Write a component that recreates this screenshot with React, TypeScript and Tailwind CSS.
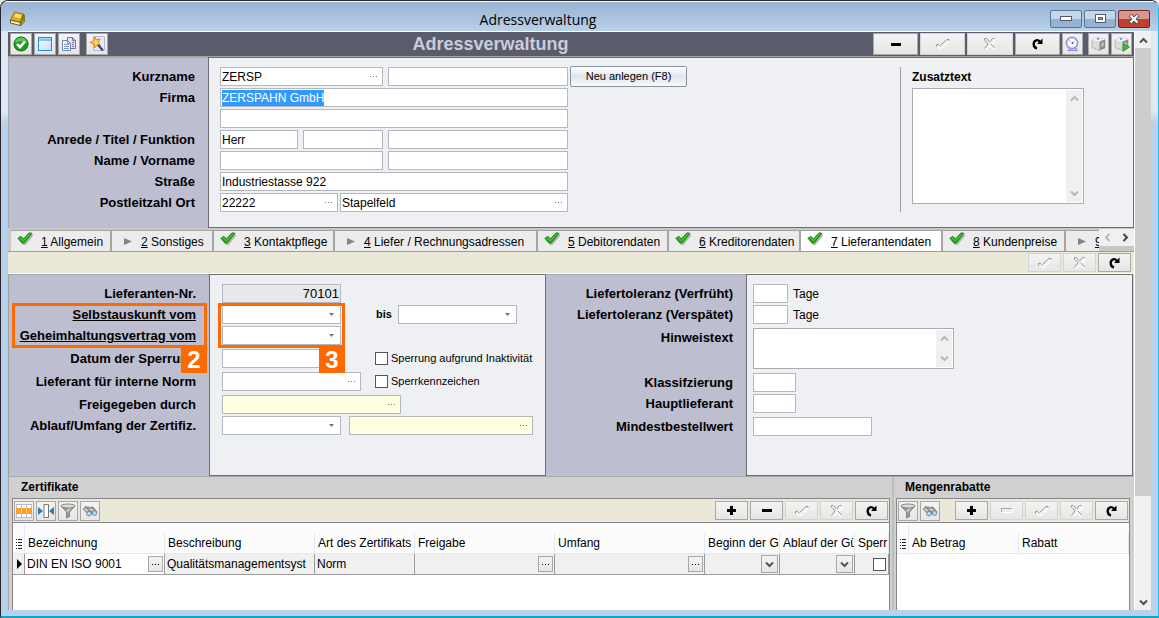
import { useEffect, useRef } from "react";
import type { ReactNode } from "react";
import clsx from "clsx";

/*---------Icons----------*/
const MinusIcon = () => (
  <svg width="10" height="3" shapeRendering="crispEdges">
    <rect width="10" height="3" fill="#000" />
  </svg>
);

const PlusIcon = () => (
  <svg width="9" height="9" shapeRendering="crispEdges">
    <path d="M3 0h3v3h3v3h-3v3h-3v-3h-3v-3h3z" fill="#000" />
  </svg>
);

const MinusOffIcon = () => (
  <svg width="13" height="7" viewBox="0 0 13 7" fill="none" shapeRendering="crispEdges">
    <path d="M1.5 5.500h11v-4" stroke="#fff" />
    <path d="M1.500 5v-3.500h10" stroke="#a8a8a8" />
  </svg>
);

const CheckOffIcon = () => (
  <svg width="14" height="12" viewBox="0 0 14 12" fill="none">
    <path d="M2 8l3 3 8.500-8.500" stroke="#fff" strokeWidth="1.200" />
    <path d="M.5 8.500v-2h2l2 2M5 7l6-5.500h2v1.500" stroke="#999" />
  </svg>
);

const CrossOffIcon = () => (
  <svg width="12" height="12" viewBox="0 0 12 12" fill="none">
    <path d="M1.500 11.500l4.500-4 4 4M7.500 6.500l4-4.500" stroke="#fff" strokeWidth="1.200" />
    <path d="M.5 2.500v-2h2l3 3.500 3-3.500h2M1 2.500l3 3.500-3.500 4.500M7 6l3.500 4" stroke="#999" />
  </svg>
);

const RefreshIcon = () => (
  <svg width="11" height="12" viewBox="0 0 11 12">
    <path d="M5 10.500C.8 9.500.6 3.300 4.300 2.300c1.600-.4 2.700.3 3.500 1.500" fill="none" stroke="#000" strokeWidth="2.300" />
    <path d="M10.500.5v5.500H5z" fill="#000" />
  </svg>
);

const OkIcon = () => (
  <svg width="16" height="16" viewBox="0 0 16 16">
    <circle cx="8" cy="8" r="7.300" fill="#1c9a22" />
    <path d="M1.500 7a6.500 6.500 0 0 1 13 0c-4-2-9-2-13 0z" fill="#5cc257" />
    <circle cx="8" cy="8" r="7" fill="none" stroke="#16781b" />
    <path d="M4 8l3 3 5-5.500" fill="none" stroke="#fff" strokeWidth="2.600" />
  </svg>
);

const WindowIcon = () => (
  <svg width="16" height="16" viewBox="0 0 16 16">
    <defs>
      <linearGradient id="win" x1="0" y1="0" x2="1" y2="1">
        <stop offset="0" stopColor="#fff" />
        <stop offset="1" stopColor="#cfd6f7" />
      </linearGradient>
    </defs>
    <rect x="1.500" y="1.500" width="13" height="13" fill="url(#win)" stroke="#1592f0" />
    <path d="M2 2.500h12" stroke="#a5dafc" />
    <path d="M1 4h14" stroke="#1592f0" />
  </svg>
);

const CopyIcon = () => (
  <svg width="16" height="16" viewBox="0 0 16 16">
    <path d="M6.500 1.500h5l3 3v8h-8z" fill="#dfe1f4" stroke="#7b6fa8" />
    <path d="M11.500 1.500v3h3M11 6.500h2M11 8.500h2M11 10.500h2" fill="none" stroke="#7b6fa8" />
    <path d="M1.500 4.500h5l3 3v7h-8z" fill="#f7f9fd" stroke="#6b86b5" />
    <path d="M6.500 4.500v3h3M3 8.500h5M3 10.500h5M3 12.500h5" fill="none" stroke="#7c97c5" />
  </svg>
);

const WizardIcon = () => (
  <svg width="16" height="16" viewBox="0 0 16 16">
    <path d="M4.500.5h11v14h-11z" fill="#e6e9fb" stroke="#b2badb" />
    <path d="M6 1l1.500 3 3.500-1-1.500 3.500 2 3-3.500-.5-2.500 3-.5-4-4-1.500 3.500-1.500z" fill="#fdd05f" stroke="#e87d12" />
    <path d="M9 9l5 5.500" stroke="#3b4457" strokeWidth="2" />
  </svg>
);

const ClockIcon = () => (
  <svg width="15" height="16" viewBox="0 0 15 16">
    <path d="M4 13l-1 1.500h9.500L11 12z" fill="#c9c9ee" stroke="#8f90cc" />
    <circle cx="7" cy="7" r="5.600" fill="#fbfbff" stroke="#9a9bdc" strokeWidth="1.800" />
    <circle cx="7.500" cy="7" r="1" fill="#3f4484" />
    <path d="M4 4l3 3M10 5l-2 1.500" stroke="#c3c4e8" />
  </svg>
);

const BoxIcon = ({ play }: { play?: boolean }) => (
  <svg width="16" height="16" viewBox="0 0 16 16">
    <path d="M1 4l6-2.500 7 2v8.500l-6 2.500-7-3z" fill="#dcdcdc" stroke="#a5a5a5" strokeWidth=".7" />
    <path d="M1 4l6-2.500 7 2-5.500 2z" fill="#f7f7f7" />
    <path d="M8.500 5.500l5.500-2v8.500l-5.500 2.500z" fill="#8b8b8b" />
    <path d="M10 7l3-1v4l-3 1z" fill="#b6b6b6" />
    <path d="M6 2.500l2 1" stroke="#4aa7b5" strokeWidth="1.500" />
    {play && <path d="M9 7.500l6.500 3.500-6.500 4.500z" fill="#3dbb2f" stroke="#1f8a1a" strokeWidth=".6" />}
  </svg>
);

const BookIcon = () => (
  <svg width="17" height="16" viewBox="0 0 17 16">
    <path d="M5.500 1l9 2-3 8.500L1.500 9z" fill="#dba91a" stroke="#8a6508" strokeWidth=".8" />
    <path d="M6.500 2.500l6 1.300-1.300 3.700L5 6z" fill="#f8dc6c" />
    <path d="M1.500 9l10 2.500-.5 3L1.500 12z" fill="#f5efcf" stroke="#6c4c08" strokeWidth=".9" />
    <path d="M11.500 11.500l3-8.500 1 1.500v6l-4 4.500z" fill="#a47708" stroke="#6c4c08" strokeWidth=".5" />
    <rect x="13" y="10" width="2" height="2.500" fill="#38d62c" />
  </svg>
);

const TickIcon = () => (
  <svg width="17" height="15" viewBox="0 0 17 15">
    <path d="M2 8.500l3-2.500 3 2.500 5.500-6.500 2.500.5-.5 2-7 8.500h-2.500z" fill="#8b8b8b" opacity=".6" />
    <path d="M.8 6.300L3.800 4.300 6.500 6.800 12 .8l3 .4L7.300 11 5 11z" fill="#27a81b" stroke="#1a7f14" strokeWidth=".8" strokeLinejoin="round" />
    <path d="M3 5.700l3.500 3L13 1.800" fill="none" stroke="#5fd048" />
  </svg>
);

const PlayIcon = () => (
  <svg width="8" height="7" viewBox="0 0 8 7">
    <path d="M0 0l8 3.500-8 3.500z" fill="#858585" />
  </svg>
);

const GridIcon = () => (
  <svg width="16" height="16" viewBox="0 0 16 16" shapeRendering="crispEdges">
    <path d="M0 1h16v14h-16z" fill="#fff" />
    <path d="M0 1.500h16M0 14.500h16M5.500 1v14M10.500 1v14M.5 1v14M15.500 1v14" stroke="#b7b9e0" />
    <path d="M0 5h16v6h-16z" fill="#fba22c" />
    <path d="M5.500 5v6M10.500 5v6" stroke="#ffc876" />
  </svg>
);

const ColumnIcon = () => (
  <svg width="16" height="16" viewBox="0 0 16 16">
    <path d="M0 4l5 4-5 4zM16 4l-5 4 5 4z" fill="#2f78bd" />
    <rect x="6" y="1.500" width="4.500" height="13" fill="#fff" stroke="#7d7d7d" />
  </svg>
);

const FilterIcon = () => (
  <svg width="16" height="16" viewBox="0 0 16 16">
    <path d="M1 3l5.500 6v6l3-1.500V9L15 3z" fill="#9b9b9b" stroke="#6f6f6f" strokeWidth=".7" />
    <path d="M7.500 9l4-4.500h-2l-3 4z" fill="#ededed" />
    <ellipse cx="8" cy="3" rx="7" ry="2" fill="#dedede" stroke="#6f6f6f" strokeWidth=".8" />
  </svg>
);

const BinocularsIcon = () => (
  <svg width="16" height="16" viewBox="0 0 16 16">
    <path d="M1 6l2.500-2.500L8 4.500l3-.5 4 5-2 2-4-1-3 1z" fill="#9a9a9a" stroke="#666" strokeWidth=".6" />
    <path d="M2.500 5.500l4 3.500M8 5.500l4 3" stroke="#dcdcdc" strokeWidth="1.400" />
    <circle cx="7" cy="10.500" r="2.300" fill="#b5dcf5" stroke="#5c7180" strokeWidth=".8" />
    <circle cx="12.500" cy="10" r="2.300" fill="#b5dcf5" stroke="#5c7180" strokeWidth=".8" />
  </svg>
);

const ListIcon = () => (
  <svg width="6" height="10" viewBox="0 0 6 10" shapeRendering="crispEdges">
    <path d="M0 .5h1M2 .5h4M0 3.500h1M2 3.500h4M0 6.500h1M2 6.500h4M0 9.500h1M2 9.500h4" stroke="#222" />
  </svg>
);

const Dots = ({ dark }: { dark?: boolean }) => (
  <svg width="7" height="1" shapeRendering="crispEdges">
    <path d="M0 .5h1M3 .5h1M6 .5h1" stroke={dark ? "#000" : "#777"} />
  </svg>
);

const Chevron = ({ dir, color = "#b8b8b8" }: { dir: "up" | "down" | "left" | "right"; color?: string }) => {
  const paths = {
    up: "M1 6.500l3.500-3.500 3.500 3.500",
    down: "M1 2.500l3.500 3.500 3.500-3.500",
    left: "M6.500 1l-3.500 3.500 3.500 3.500",
    right: "M2.500 1l3.500 3.500-3.500 3.500",
  };
  return (
    <svg width="9" height="9" viewBox="0 0 9 9">
      <path d={paths[dir]} fill="none" stroke={color} strokeWidth="2" />
    </svg>
  );
};

/*---------Form elements----------*/
const ToolButton = ({ label, className, off, children }: { label: string; className?: string; off?: boolean; children: ReactNode }) => (
  <button
    type="button"
    aria-label={label}
    disabled={off}
    className={clsx(
      "flex shrink-0 items-center justify-center border bg-linear-to-b from-[#f3f3f3] to-[#e6e6e6]",
      off ? "border-[#d4d4d4]" : "border-[#a8a8a8]",
      className
    )}
  >
    {children}
  </button>
);

type FieldProps = { id: string; label?: string; value?: string; className?: string; dots?: boolean; yellow?: boolean };

const TextField = ({ id, label, value = "", className, dots, yellow }: FieldProps) => (
  <div className={clsx("flex h-[19px] shrink-0 border border-[#b3b7bf]", yellow ? "bg-[#ffffe1]" : "bg-white", className)}>
    <input id={id} aria-label={label} defaultValue={value} className="w-0 min-w-0 flex-1 px-px leading-4 outline-none" />
    {dots && (
      <button type="button" aria-label="Auswahl" className="flex w-[18px] items-center justify-center">
        <Dots />
      </button>
    )}
  </div>
);

const DropField = ({ id, label }: { id: string; label?: string }) => (
  <div className="relative h-[19px] w-[119px] shrink-0">
    <select id={id} aria-label={label} className="h-full w-full appearance-none border border-[#b3b7bf] bg-white outline-none">
      <option value=""></option>
    </select>
    <svg width="5" height="3" className="pointer-events-none absolute top-2 right-[7px]">
      <path d="M0 0h5l-2.500 3z" fill="#757575" />
    </svg>
  </div>
);

const MemoField = ({ id, className }: { id: string; className: string }) => (
  <div className={clsx("flex border border-[#a9abb0] bg-white p-px", className)}>
    <textarea id={id} className="min-w-0 flex-1 resize-none outline-none" />
    <div className="flex w-4 flex-col items-center justify-between bg-[#f0f0f0] py-1">
      <Chevron dir="up" />
      <Chevron dir="down" />
    </div>
  </div>
);

const RowLabel = ({ htmlFor, underline, children }: { htmlFor?: string; underline?: boolean; children: ReactNode }) => (
  <label htmlFor={htmlFor} className={clsx("h-[19px] text-[13px] leading-[19px] font-bold whitespace-nowrap", underline && "underline")}>
    {children}
  </label>
);

const Marker = ({ nr, className }: { nr: number; className: string }) => (
  <div className={clsx("pointer-events-none absolute z-10 h-[45px] border-3 border-[#ff6a00]", className)}>
    <span className="absolute -right-[3px] top-[41px] flex size-[26px] items-center justify-center bg-[#ff6a00] text-2xl font-bold text-white">
      {nr}
    </span>
  </div>
);

const tabs = [
  { nr: 1, text: "Allgemein", done: true, width: "w-[101px]" },
  { nr: 2, text: "Sonstiges", width: "w-[102px]" },
  { nr: 3, text: "Kontaktpflege", done: true, width: "w-[121px]" },
  { nr: 4, text: "Liefer / Rechnungsadressen", width: "w-[203px]" },
  { nr: 5, text: "Debitorendaten", done: true, width: "w-[131px]" },
  { nr: 6, text: "Kreditorendaten", done: true, width: "w-[132px]" },
  { nr: 7, text: "Lieferantendaten", done: true, active: true, width: "w-[142px]" },
  { nr: 8, text: "Kundenpreise", done: true, width: "w-[123px]" },
  { nr: 9, text: "", width: "w-[102px]" },
];

const certColumns = [
  { text: "Bezeichnung", width: "w-[140px]" },
  { text: "Beschreibung", width: "w-[150px]" },
  { text: "Art des Zertifikats", width: "w-[100px]" },
  { text: "Freigabe", width: "w-[140px]" },
  { text: "Umfang", width: "w-[150px]" },
  { text: "Beginn der G", width: "w-[75px]" },
  { text: "Ablauf der Gü", width: "w-[75px]" },
  { text: "Sperr", width: "" },
];

const HeadCell = ({ text, width }: { text: string; width: string }) => (
  <th className={clsx("h-[31px] border-b border-[#dfeafa] p-0 align-bottom font-normal", width)}>
    <div className="h-5 overflow-hidden border-r border-[#dfeafa] pl-[3px] text-left leading-5 whitespace-nowrap">{text}</div>
  </th>
);

const CellButton = ({ drop }: { drop?: boolean }) => (
  <ToolButton label="Auswahl" className={drop ? "h-[18px] w-[17px]" : "h-4 w-[15px]"}>
    {drop ? <Chevron dir="down" color="#555" /> : <Dots dark />}
  </ToolButton>
);

const BodyCell = ({ white, children }: { white?: boolean; children?: ReactNode }) => (
  <td className={clsx("h-[21px] border-r border-b border-[#9b9b9b] p-0", white ? "bg-white" : "bg-[#f0f0f0]")}>
    <div className="flex h-5 items-center justify-between overflow-hidden pr-px pl-0.5 whitespace-nowrap">{children}</div>
  </td>
);

const App = () => {
  const firmaRef = useRef<HTMLInputElement>(null);

  useEffect(() => {
    firmaRef.current?.focus();
    firmaRef.current?.select();
  }, []);

  return (
    <div className="bg-[#e8e8e8] font-['Liberation_Sans',Arial,sans-serif] text-xs text-black">
      <div className="flex min-h-screen flex-col overflow-hidden rounded-t-lg border border-r-[#1ac4e6] border-b-2 border-[#26262e] border-b-[#0fa3c4] bg-linear-to-b from-[#dfe9f6] from-[110px] to-[#b9d1ea] to-[122px]">
        {/*---------Title bar----------*/}
        <header className="flex h-[30px] items-center border-t border-white bg-linear-to-b from-[#98b2d1] to-[#b9d1ea] pt-1 pr-2 pl-2">
          <BookIcon />
          <div className="flex-1 pt-0.5 text-center font-['Open_Sans',sans-serif] text-sm">Adressverwaltung</div>
          <div className="flex gap-0.5">
            <button type="button" aria-label="Minimieren" className="flex h-[18px] w-8 items-center justify-center rounded-xs border border-[#5c7590] bg-linear-to-b from-[#c3d6ea] from-50% to-[#94b3d3] to-50%">
              <svg width="12" height="5"><rect x=".5" y=".5" width="11" height="4" fill="#fff" stroke="#555b66" /></svg>
            </button>
            <button type="button" aria-label="Maximieren" className="flex h-[18px] w-8 items-center justify-center rounded-xs border border-[#5c7590] bg-linear-to-b from-[#c3d6ea] from-50% to-[#94b3d3] to-50%">
              <svg width="11" height="9"><rect x=".5" y=".5" width="10" height="8" fill="#fff" stroke="#555b66" /><rect x="3.500" y="3.500" width="4" height="2" fill="#9ab4d0" stroke="#555b66" /></svg>
            </button>
            <button type="button" aria-label="Schließen" className="flex h-[18px] w-8 items-center justify-center rounded-xs border border-[#6b2727] bg-linear-to-b from-[#dd958b] from-50% to-[#c23f2c] to-50%">
              <svg width="12" height="10" viewBox="0 0 12 10"><path d="M2 1l8 8M10 1l-8 8" stroke="#4a4f5c" strokeWidth="4" /><path d="M2.500 1.500l7 7M9.500 1.500l-7 7" stroke="#fff" strokeWidth="2.200" /></svg>
            </button>
          </div>
        </header>

        <div className="mr-[7px] mb-1.5 ml-[7px] flex flex-1 border-t border-white bg-[#f0f0f0]">
          <main className="flex min-w-0 flex-1 flex-col bg-[#d0d0d0]">
            {/*---------Toolbar----------*/}
            <div className="flex h-[25px] items-center border-b border-[#a3a3a0] bg-[#5a5c6c] pr-0.5 pl-0.5">
              <div className="flex gap-0.5">
                <ToolButton label="OK" className="size-[22px]"><OkIcon /></ToolButton>
                <ToolButton label="Fenster" className="size-[22px]"><WindowIcon /></ToolButton>
                <ToolButton label="Kopieren" className="size-[22px]"><CopyIcon /></ToolButton>
                <ToolButton label="Assistent" className="ml-1 size-[22px]"><WizardIcon /></ToolButton>
              </div>
              <h1 className="flex-1 text-center text-lg leading-6 font-bold text-[#c9cddb]">Adressverwaltung</h1>
              <div className="flex gap-0.5">
                <ToolButton label="Löschen" className="h-[22px] w-[45px]"><MinusIcon /></ToolButton>
                <ToolButton label="Speichern" off className="h-[22px] w-[45px]"><CheckOffIcon /></ToolButton>
                <ToolButton label="Verwerfen" off className="h-[22px] w-[46px]"><CrossOffIcon /></ToolButton>
                <ToolButton label="Aktualisieren" className="h-[22px] w-[45px]"><RefreshIcon /></ToolButton>
                <ToolButton label="Verlauf" className="h-[22px] w-[21px]"><ClockIcon /></ToolButton>
                <ToolButton label="Paket" className="ml-[3px] h-[22px] w-[21px]"><BoxIcon /></ToolButton>
                <ToolButton label="Paket starten" className="h-[22px] w-[21px]"><BoxIcon play /></ToolButton>
              </div>
            </div>

            {/*---------Address----------*/}
            <section className="flex">
              <div className="flex w-[200px] flex-col items-end gap-0.5 border-t border-l border-[#a6a7b6] bg-[#bdbecf] pt-[9px] pr-[13px]">
                <RowLabel htmlFor="kurzname">Kurzname</RowLabel>
                <RowLabel htmlFor="firma">Firma</RowLabel>
                <div className="h-[19px]" />
                <RowLabel htmlFor="anrede">Anrede / Titel / Funktion</RowLabel>
                <RowLabel htmlFor="name">Name / Vorname</RowLabel>
                <RowLabel htmlFor="strasse">Straße</RowLabel>
                <RowLabel htmlFor="plz">Postleitzahl Ort</RowLabel>
              </div>
              <div className="flex flex-1 border border-[#6e6e72] bg-[#eff0f3] pt-[9px] pb-[15px] pl-[11px]">
                <div className="flex flex-1 flex-col gap-0.5">
                  <div className="flex h-[19px] items-center">
                    <TextField id="kurzname" value="ZERSP" dots className="w-[163px]" />
                    <TextField id="kurzname2" label="Kurzname 2" className="ml-[5px] w-[180px]" />
                    <button type="button" className="ml-0.5 h-[21px] w-[117px] rounded-xs border border-[#8a93a0] bg-linear-to-b from-white via-[#dfe5ee] to-[#f8fafc] text-[11px]">
                      Neu anlegen (F8)
                    </button>
                  </div>
                  <div className="flex h-[19px] w-[348px] items-center border border-[#b3b7bf] bg-white px-px">
                    <input id="firma" ref={firmaRef} defaultValue="ZERSPAHN GmbH" className="min-w-0 flex-1 leading-4 outline-none selection:bg-[#3399ff] selection:text-white" />
                  </div>
                  <TextField id="firma2" label="Firma 2" className="w-[348px]" />
                  <div className="flex gap-[5px]">
                    <TextField id="anrede" value="Herr" className="w-[78px]" />
                    <TextField id="titel" label="Titel" className="w-20" />
                    <TextField id="funktion" label="Funktion" className="w-[180px]" />
                  </div>
                  <div className="flex gap-[5px]">
                    <TextField id="name" className="w-[163px]" />
                    <TextField id="vorname" label="Vorname" className="w-[180px]" />
                  </div>
                  <TextField id="strasse" value="Industriestasse 922" className="w-[348px]" />
                  <div className="flex gap-0.5">
                    <TextField id="plz" value="22222" dots className="w-[118px]" />
                    <TextField id="ort" label="Ort" value="Stapelfeld" dots className="w-[228px]" />
                  </div>
                </div>
                <div className="w-[233px] border-l border-[#a0a0a0] pl-[11px]">
                  <label htmlFor="zusatz" className="block h-[21px] leading-[21px] font-bold">Zusatztext</label>
                  <MemoField id="zusatz" className="h-[116px] w-[172px]" />
                </div>
              </div>
            </section>

            {/*---------Tabs----------*/}
            <nav className="relative flex h-6 items-end overflow-hidden border-b border-[#9d9d9d] bg-[#c8c8c8] pl-[3px]">
              {tabs.map((tab) => (
                <button
                  key={tab.nr}
                  type="button"
                  className={clsx(
                    "flex h-[21px] shrink-0 items-center border-t border-r-2 border-[#a5a5a5] pt-px whitespace-nowrap",
                    tab.active ? "bg-white" : "bg-[#ececec]",
                    tab.width
                  )}
                >
                  <span className={clsx("flex shrink-0", tab.done ? "w-[30px] pb-1 pl-1.5" : "w-[29px] pl-3")}>
                    {tab.done ? <TickIcon /> : <PlayIcon />}
                  </span>
                  <span><u>{tab.nr}</u> {tab.text}</span>
                </button>
              ))}
              <div className="absolute top-px right-0 flex h-[22px] w-[35px] bg-[#c8c8c8]">
                <div className="flex h-[17px] flex-1 items-center justify-around bg-[#f0f0f0]">
                  <button type="button" aria-label="Zurück"><Chevron dir="left" /></button>
                  <button type="button" aria-label="Weiter"><Chevron dir="right" color="#444" /></button>
                </div>
              </div>
            </nav>
            <div className="flex h-[22px] items-center justify-end gap-0.5 border-b border-white bg-[#ebe8d8] pr-[3px]">
              <ToolButton label="Speichern" off className="h-[19px] w-[33px]"><CheckOffIcon /></ToolButton>
              <ToolButton label="Verwerfen" off className="h-[19px] w-[33px]"><CrossOffIcon /></ToolButton>
              <ToolButton label="Aktualisieren" className="h-[19px] w-[33px]"><RefreshIcon /></ToolButton>
            </div>

            {/*---------Supplier data----------*/}
            <section className="flex border-l border-[#a0a0a0]">
              <div className="relative flex w-[200px] flex-col items-end gap-1 border-t border-[#a6a7b6] bg-[#bdbecf] pt-[9px] pr-[13px]">
                <Marker nr={2} className="top-7 right-0.5 w-[195px]" />
                <div className="flex flex-col items-end gap-0.5">
                  <RowLabel htmlFor="liefnr">Lieferanten-Nr.</RowLabel>
                  <RowLabel htmlFor="selbst" underline>Selbstauskunft vom</RowLabel>
                  <RowLabel htmlFor="geheim" underline>Geheimhaltungsvertrag vom</RowLabel>
                </div>
                <RowLabel htmlFor="sperrdatum">Datum der Sperrung</RowLabel>
                <RowLabel htmlFor="norm">Lieferant für interne Norm</RowLabel>
                <div className="flex flex-col items-end gap-0.5">
                  <RowLabel htmlFor="freigabe">Freigegeben durch</RowLabel>
                  <RowLabel htmlFor="ablauf">Ablauf/Umfang der Zertifiz.</RowLabel>
                </div>
              </div>
              <div className="relative flex w-[337px] flex-col gap-1 border border-[#6e6e72] bg-[#eff0f3] pt-[9px] pb-10 pl-3">
                <Marker nr={3} className="top-7 left-2 w-[127px]" />
                <div className="flex flex-col gap-0.5">
                  <input id="liefnr" readOnly defaultValue="70101" className="h-[19px] w-[119px] border border-[#b3b7bf] bg-[#e9e9ec] px-px text-right text-[13px] outline-none" />
                  <div className="flex">
                    <DropField id="selbst" />
                    <label htmlFor="bis" className="w-[57px] pr-[6px] text-right text-[11px] leading-[19px] font-bold">bis</label>
                    <DropField id="bis" />
                  </div>
                  <DropField id="geheim" />
                </div>
                <div className="flex items-center">
                  <TextField id="sperrdatum" className="w-[119px]" />
                  <label className="ml-[34px] flex items-center gap-[3px] text-[11px]">
                    <input type="checkbox" className="size-[13px] appearance-none border border-[#555] bg-white" />
                    Sperrung aufgrund Inaktivität
                  </label>
                </div>
                <div className="flex items-center">
                  <TextField id="norm" dots className="w-[139px]" />
                  <label className="ml-[14px] flex items-center gap-[3px] text-[11px]">
                    <input type="checkbox" className="size-[13px] appearance-none border border-[#555] bg-white" />
                    Sperrkennzeichen
                  </label>
                </div>
                <div className="flex flex-col gap-0.5">
                  <TextField id="freigabe" dots yellow className="w-[179px]" />
                  <div className="flex gap-2">
                    <DropField id="ablauf" />
                    <TextField id="umfang" label="Umfang" dots yellow className="w-[184px]" />
                  </div>
                </div>
              </div>
              <div className="flex w-[200px] flex-col items-end gap-1 border-t border-[#a6a7b6] bg-[#bdbecf] pt-[9px] pr-[13px]">
                <div className="flex flex-col items-end gap-0.5">
                  <RowLabel htmlFor="frueh">Liefertoleranz (Verfrüht)</RowLabel>
                  <RowLabel htmlFor="spaet">Liefertoleranz (Verspätet)</RowLabel>
                </div>
                <div className="h-[41px]"><RowLabel htmlFor="hinweis">Hinweistext</RowLabel></div>
                <div className="flex flex-col items-end gap-0.5">
                  <RowLabel htmlFor="klasse">Klassifzierung</RowLabel>
                  <RowLabel htmlFor="haupt">Hauptlieferant</RowLabel>
                </div>
                <RowLabel htmlFor="mindest">Mindestbestellwert</RowLabel>
              </div>
              <div className="mr-px flex flex-1 flex-col gap-1 border border-[#6e6e72] bg-[#eff0f3] pt-[9px] pl-[6px]">
                <div className="flex flex-col gap-0.5">
                  <div className="flex items-center gap-[5px]">
                    <TextField id="frueh" className="w-[35px]" />
                    <span>Tage</span>
                  </div>
                  <div className="flex items-center gap-[5px]">
                    <TextField id="spaet" className="w-[35px]" />
                    <span>Tage</span>
                  </div>
                </div>
                <MemoField id="hinweis" className="h-[41px] w-[201px]" />
                <div className="flex flex-col gap-0.5">
                  <TextField id="klasse" className="w-[43px]" />
                  <TextField id="haupt" className="w-[43px]" />
                </div>
                <TextField id="mindest" className="w-[119px]" />
              </div>
            </section>

            {/*---------Tables----------*/}
            <section className="flex flex-1 border-t border-l border-[#a8a8a8]">
              <div className="flex min-w-0 flex-1 flex-col border-r-2 border-[#bdbdbd] pr-0.5 pl-[3px]">
                <h2 className="pl-[9px] leading-[21px] font-bold">Zertifikate</h2>
                <div className="flex flex-1 flex-col border-t border-l border-r border-[#85878c] bg-white">
                  <div className="flex h-6 items-center gap-0.5 border-b border-[#85878c] bg-[#ebe8d8] px-px">
                    <ToolButton label="Tabelle" className="size-5"><GridIcon /></ToolButton>
                    <ToolButton label="Spaltenbreite" className="size-5"><ColumnIcon /></ToolButton>
                    <ToolButton label="Filter" className="size-5"><FilterIcon /></ToolButton>
                    <ToolButton label="Suchen" className="size-5"><BinocularsIcon /></ToolButton>
                    <div className="flex-1" />
                    <ToolButton label="Neu" className="h-[19px] w-[33px]"><PlusIcon /></ToolButton>
                    <ToolButton label="Löschen" className="h-[19px] w-[33px]"><MinusIcon /></ToolButton>
                    <ToolButton label="Speichern" off className="h-[19px] w-[33px]"><CheckOffIcon /></ToolButton>
                    <ToolButton label="Verwerfen" off className="h-[19px] w-[33px]"><CrossOffIcon /></ToolButton>
                    <ToolButton label="Aktualisieren" className="h-[19px] w-[33px]"><RefreshIcon /></ToolButton>
                  </div>
                  <table className="w-full table-fixed border-separate border-spacing-0">
                    <thead>
                      <tr className="bg-[#fcfcfd]">
                        <th className="w-3 border-r border-b border-[#dfeafa] p-0 pb-1 pl-[3px] align-bottom"><ListIcon /></th>
                        {certColumns.map((col) => (
                          <HeadCell key={col.text} text={col.text} width={col.width} />
                        ))}
                      </tr>
                    </thead>
                    <tbody>
                      <tr>
                        <td className="border-r border-b border-[#9b9b9b] bg-[#f0f0f0] p-0 pl-1">
                          <svg width="5" height="10"><path d="M0 0l5 5-5 5z" /></svg>
                        </td>
                        <BodyCell white>DIN EN ISO 9001<CellButton /></BodyCell>
                        <BodyCell>Qualitätsmanagementsyst</BodyCell>
                        <BodyCell>Norm</BodyCell>
                        <BodyCell><span /><CellButton /></BodyCell>
                        <BodyCell><span /><CellButton /></BodyCell>
                        <BodyCell><span /><CellButton drop /></BodyCell>
                        <BodyCell><span /><CellButton drop /></BodyCell>
                        <BodyCell>
                          <span />
                          <input type="checkbox" aria-label="Sperrung" className="mr-px size-[13px] shrink-0 appearance-none border border-[#555] bg-white" />
                        </BodyCell>
                      </tr>
                    </tbody>
                  </table>
                </div>
              </div>
              <div className="flex w-[240px] flex-col pr-1 pl-0.5">
                <h2 className="pl-[9px] leading-[21px] font-bold">Mengenrabatte</h2>
                <div className="flex flex-1 flex-col border-t border-l border-r border-[#85878c] bg-white">
                  <div className="flex h-6 items-center gap-0.5 border-b border-[#85878c] bg-[#ebe8d8] px-px">
                    <ToolButton label="Filter" className="size-5"><FilterIcon /></ToolButton>
                    <ToolButton label="Suchen" className="size-5"><BinocularsIcon /></ToolButton>
                    <div className="flex-1" />
                    <ToolButton label="Neu" className="h-[19px] w-[33px]"><PlusIcon /></ToolButton>
                    <ToolButton label="Löschen" off className="h-[19px] w-[33px]"><MinusOffIcon /></ToolButton>
                    <ToolButton label="Speichern" off className="h-[19px] w-[33px]"><CheckOffIcon /></ToolButton>
                    <ToolButton label="Verwerfen" off className="h-[19px] w-[33px]"><CrossOffIcon /></ToolButton>
                    <ToolButton label="Aktualisieren" className="h-[19px] w-[33px]"><RefreshIcon /></ToolButton>
                  </div>
                  <table className="w-full table-fixed border-separate border-spacing-0">
                    <thead>
                      <tr className="bg-[#fcfcfd]">
                        <th className="w-3 border-r border-b border-[#dfeafa] p-0 pb-1 pl-[3px] align-bottom"><ListIcon /></th>
                        <HeadCell text="Ab Betrag" width="w-[110px]" />
                        <HeadCell text="Rabatt" width="" />
                      </tr>
                    </thead>
                  </table>
                </div>
              </div>
            </section>
          </main>

          {/*---------Scrollbar----------*/}
          <div className="flex w-[17px] flex-col border-l border-white bg-[#f0f0f0]">
            <button type="button" aria-label="Nach oben" className="flex h-4 items-center justify-center"><Chevron dir="up" color="#505050" /></button>
            <div className="flex-1">
              <div className="h-[82%] bg-[#cdcdcd]" />
            </div>
            <button type="button" aria-label="Nach unten" className="flex h-4 items-center justify-center"><Chevron dir="down" color="#505050" /></button>
          </div>
        </div>
      </div>
    </div>
  );
};

export default App;
